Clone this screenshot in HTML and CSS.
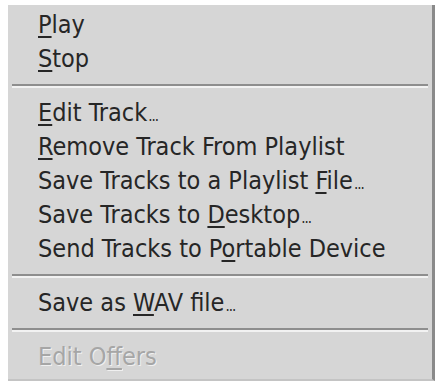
FILE: index.html
```html
<!DOCTYPE html>
<html>
<head>
<meta charset="utf-8">
<link rel="stylesheet" href="styles.css">
</head>
<body>
<div class="menu">
  <div class="item"><u>P</u>lay</div>
  <div class="item"><u>S</u>top</div>
  <div class="sep"></div>
  <div class="item"><u>E</u>dit Track<span class="ell">...</span></div>
  <div class="item"><u>R</u>emove Track From Playlist</div>
  <div class="item">Save Tracks to a Playlist <u>F</u>ile<span class="ell">...</span></div>
  <div class="item">Save Tracks to <u>D</u>esktop<span class="ell">...</span></div>
  <div class="item">Send Tracks to P<u>o</u>rtable Device</div>
  <div class="sep"></div>
  <div class="item">Save as <u>W</u>AV file<span class="ell">...</span></div>
  <div class="sep"></div>
  <div class="item disabled">Edit O<u>f</u>fers</div>
</div>
</body>
</html>
```
FILE: styles.css
```css
html, body {
  margin: 0;
  padding: 0;
  background: #ffffff;
}
body {
  width: 437px;
  height: 384px;
  overflow: hidden;
}
.menu {
  margin: 5px 0 0 8px;
  width: 427px;
  height: 376px;
  box-sizing: border-box;
  background: #d6d6d6;
  border-right: 3px solid #8a8a8a;
  border-bottom: 2px solid #c4c4c4;
  padding: 3px 0 0 0;
  font-family: "DejaVu Sans Condensed", "DejaVu Sans", sans-serif;
  font-size: 25px;
  color: #262626;
}
.item {
  height: 34px;
  line-height: 34px;
  padding-left: 30px;
  white-space: nowrap;
}
.item u {
  text-decoration-thickness: 2px;
  text-underline-offset: 3px;
}
.ell {
  letter-spacing: -1px;
  font-size: 15px;
  margin-left: 1px;
}
.sep {
  height: 20px;
  display: flex;
  flex-direction: column;
  justify-content: center;
  padding: 0 4px;
}
.sep::before {
  content: "";
  display: block;
  height: 2px;
  background: #8e8e8e;
  border-bottom: 2px solid #f2f2f2;
}
.disabled {
  color: #a6a6a6;
  text-shadow: 1px 1px 0 #f0f0f0;
}
```
